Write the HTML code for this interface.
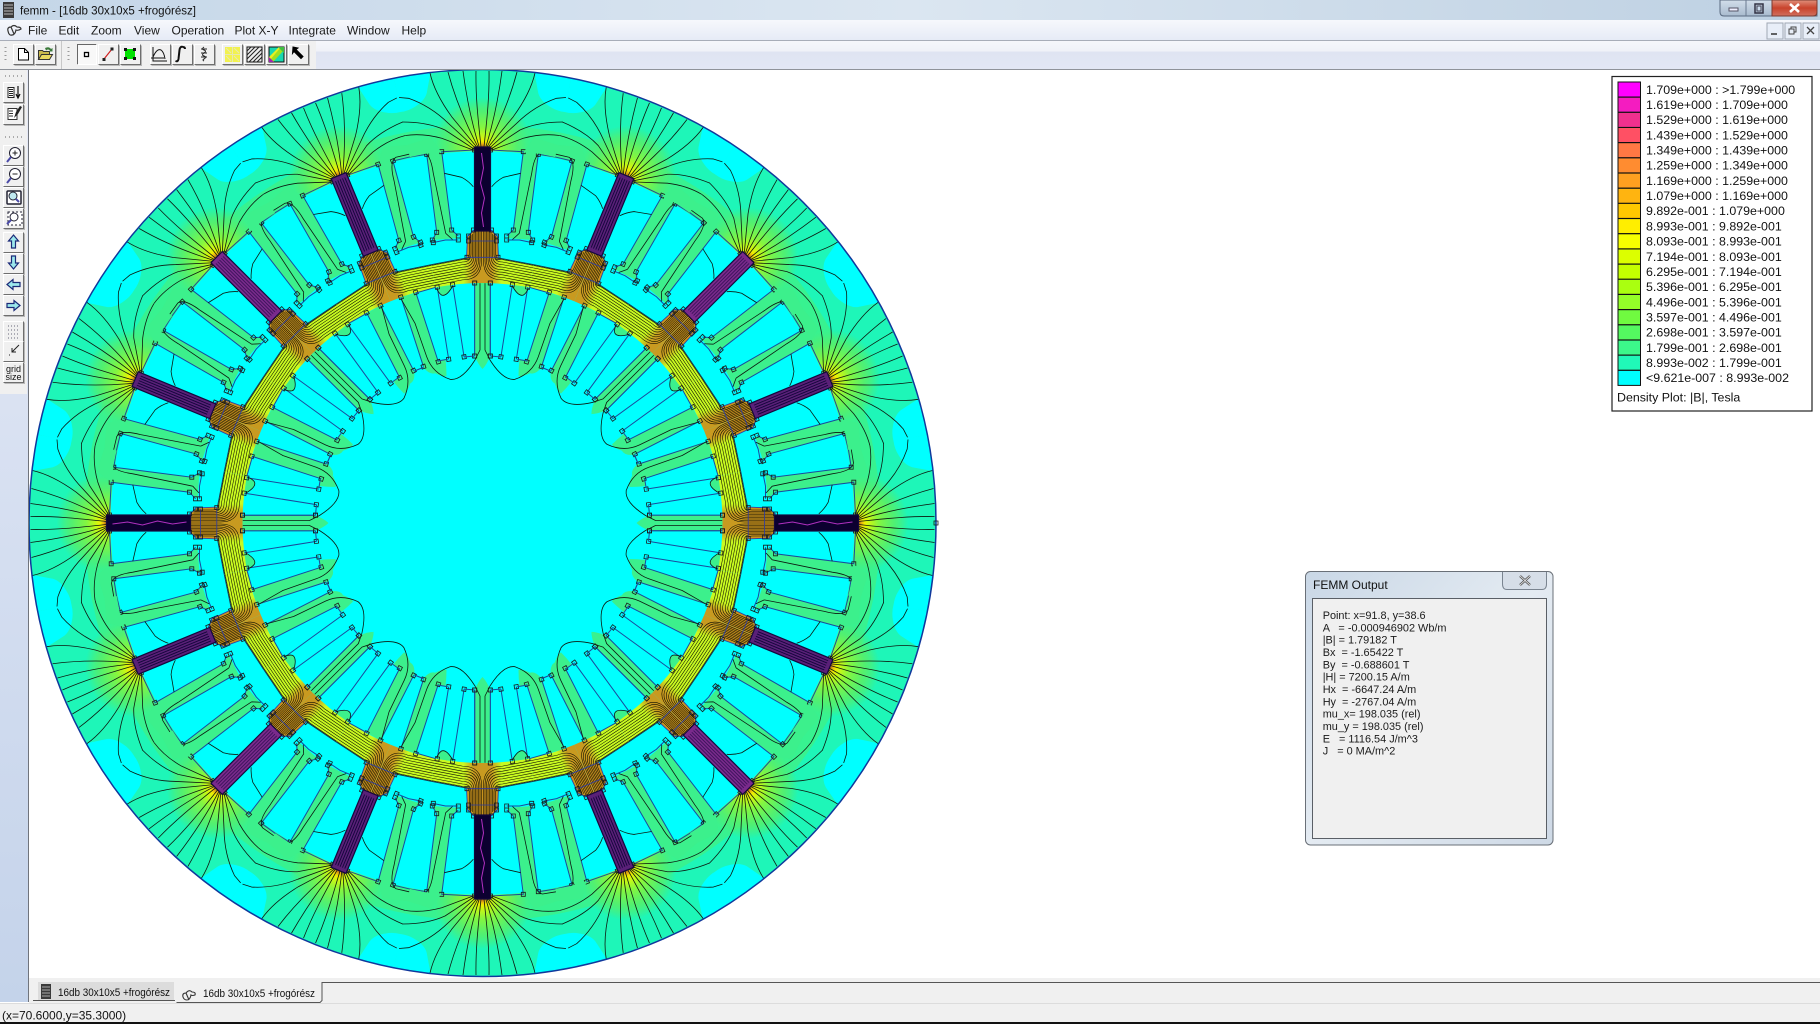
<!DOCTYPE html>
<html><head><meta charset="utf-8"><title>femm</title>
<style>
html,body{margin:0;padding:0;background:#fff;width:1820px;height:1024px;overflow:hidden}
svg{display:block;position:absolute;left:0;top:0}
text{font-family:"Liberation Sans",sans-serif;fill:#111;white-space:pre}
.m{font-size:12px;fill:#1a1a1a}
.l{font-size:12.4px;fill:#111}
.d{font-size:10.9px;fill:#1a1a1a}
.c{stroke:#0c1a10;stroke-width:.8;fill:none;stroke-linejoin:round}
.y{stroke:#0a0a00;stroke-width:.55;fill:none}
.s{stroke:#1a4a9c;stroke-width:1;fill:none}
.q{stroke:#1a1a1a;stroke-width:.8;fill:none}
</style></head><body>
<svg width="1820" height="1024" viewBox="0 0 1820 1024" xmlns="http://www.w3.org/2000/svg">
<defs>
<linearGradient id="tb" x1="0" x2="1" y1="0" y2="0"><stop offset="0" stop-color="#c4d6e8"/><stop offset=".5" stop-color="#dbe6f1"/><stop offset="1" stop-color="#bdd0e2"/></linearGradient>
<linearGradient id="mb" x1="0" x2="0" y1="0" y2="1"><stop offset="0" stop-color="#f6f8fc"/><stop offset="1" stop-color="#e6ebf6"/></linearGradient>
<linearGradient id="tr" x1="0" x2="0" y1="0" y2="1"><stop offset="0" stop-color="#f6f7fb"/><stop offset=".35" stop-color="#f0f2f8"/><stop offset=".4" stop-color="#dfe4f2"/><stop offset="1" stop-color="#e2e7f4"/></linearGradient>
<linearGradient id="lb" x1="0" x2="0" y1="0" y2="1"><stop offset="0" stop-color="#e6eaf7"/><stop offset="1" stop-color="#c4d3ea"/></linearGradient>
<linearGradient id="cl" x1="0" x2="0" y1="0" y2="1"><stop offset="0" stop-color="#e0907c"/><stop offset=".5" stop-color="#c8432c"/><stop offset="1" stop-color="#d07060"/></linearGradient>
<linearGradient id="mn" x1="0" x2="0" y1="0" y2="1"><stop offset="0" stop-color="#d2deea"/><stop offset="1" stop-color="#a8bace"/></linearGradient>
<linearGradient id="dg" x1="0" x2="1" y1="0" y2="1"><stop offset="0" stop-color="#c9d7e6"/><stop offset=".5" stop-color="#e4ebf2"/><stop offset="1" stop-color="#ced9e6"/></linearGradient>
<radialGradient id="tip" gradientUnits="userSpaceOnUse" cx="0" cy="-376" r="50"><stop offset="0" stop-color="#a85a10"/><stop offset=".06" stop-color="#e8b010"/><stop offset=".12" stop-color="#f0ee00"/><stop offset=".22" stop-color="#c4f818"/><stop offset=".4" stop-color="#84f640"/><stop offset=".7" stop-color="#52f070" stop-opacity=".9"/><stop offset="1" stop-color="#3cf08c" stop-opacity="0"/></radialGradient>
<linearGradient id="yk" gradientUnits="userSpaceOnUse" x1="9" y1="0" x2="19" y2="0"><stop offset="0" stop-color="#c89a20"/><stop offset="1" stop-color="#c8fa20"/></linearGradient>

<g id="b"><rect width="21" height="21" fill="#f0f0f0"/><path d="M.5 20.5V.5H20.5" stroke="#fff" fill="none"/><path d="M.5 20.5H20.5V.5" stroke="#6e6e6e" fill="none"/><path d="M1.5 21.5H21.5V1.5" stroke="#a8a8a8" fill="none" stroke-width=".8"/></g>

<!-- back of the outer half unit -->
<g id="ob">
<path d="M52 -450 L55.8 -429.7 Q58 -422 67.5 -416.3 Q74 -412 82 -411 L88.4 -444.3 A453 453 0 0 0 52 -450Z" fill="#00ffff"/>
<circle cx="0" cy="-376" r="50" fill="url(#tip)"/>
</g>
<!-- outer half unit -->
<g id="oh">
<!-- tooth -->
<path d="M40.8 -372L55.8 -369L45.8 -291L50.2 -283L24.2 -285L30.8 -293Z" fill="#3cf08c"/>
<path d="M40.8 -373L55.8 -369L88.5 -363L104 -358L100 -376L50 -380Z" fill="#3cf08c"/>
<!-- yoke -->
<path d="M0 -265L16 -265L51.4 -258.2L46.8 -235.4A240 240 0 0 0 0 -240Z" fill="url(#yk)"/>
<!-- hub -->
<path d="M0 -293L8 -293L15 -287L16 -265L0 -265Z" fill="#c8921e"/>
<path class="y" d="M1 -292L1 -262Q1 -243.1 20 -243.1L47.3 -237.9M2.5 -292L2.5 -262Q2.5 -245.6 20 -245.6L47.8 -240.3M4 -292L4 -263Q4 -248.2 20 -248.2L48.3 -242.8M5.5 -292L5.5 -264Q5.5 -250.8 20 -250.8L48.8 -245.3M7 -292L7 -265Q7 -253.3 20 -253.3L49.2 -247.7M8.5 -291L8.5 -267Q8.5 -255.9 20 -255.9L49.7 -250.2M10 -289L10 -268Q10 -258.4 20 -258.4L50.2 -252.6M11.5 -288L11.5 -269Q11.5 -261 20 -261L50.7 -255.1M13 -287L13 -270Q13 -263.4 20 -263.4L51.2 -257.5"/>
<path d="M0 -293H8M8 -293L15 -287L16 -265M0 -282H14M0 -265.7H15.5" stroke="#2a3aa8" stroke-width=".8" fill="none"/>
<path d="M16 -265L51.4 -258.2" stroke="#123a50" stroke-width="1" fill="none"/>
<!-- slots -->
<path class="s" d="M8 -373L40.8 -371.3L30.8 -293L24.2 -287M55.8 -368.7L73 -366M55.8 -368.7L45.8 -290.7L50.2 -283M24.2 -283L37 -283L50.2 -280.3M9 -293L14 -287"/>
<!-- squares -->
<path class="q" d="M6 -375h4v4h-4zM38.8 -373.3h4v4h-4zM53.8 -370.7h4v4h-4zM28.8 -295h4v4h-4zM43.8 -292.7h4v4h-4zM22.2 -289h4v4h-4zM22.2 -285h4v4h-4zM48.2 -285h4v4h-4zM47.2 -282.3h4v4h-4zM7 -295h4v4h-4zM12 -284h4v4h-4zM13.5 -267.7h4v4h-4zM12 -289h4v4h-4z"/>
<!-- contours -->
<path class="c" d="M1.5 -376C4 -400 7 -425 6.5 -452M3 -375Q14 -410 19.5 -452M4 -375Q25 -415 34.5 -451M5 -375L30.8 -406.3Q48 -430 52.5 -450M6 -374L34.2 -399.7Q52 -417 74 -424.7L83.5 -425.5M7 -373L37.5 -393Q55 -401 80 -401M8 -372.5L40.8 -384.7Q60 -390 77 -387.5M36.8 -289.7L49.2 -349.7Q52 -370 60 -371L73.4 -368.8M9.2 -336.3Q14 -342 20.8 -345.7L38.2 -349.7M36.8 -289.7L30 -283.5"/>
</g>
<!-- inner tooth lines -->
<g id="tt"><path class="s" d="M7.8 -240V-167M-7.8 -240V-167"/><path class="q" d="M5.8 -242h4v4h-4zM-9.8 -242h4v4h-4zM5.8 -169h4v4h-4zM-9.8 -169h4v4h-4z"/></g>
<!-- inner unit (wedge 0-22.5) -->
<g id="ih">
<path d="M0 -240H7.8V-167Q4 -158 0 -154Z" fill="#3cf08c"/>
<path d="M66.8 -230L82.2 -225.7L59.2 -155.7Q53 -148 47.5 -149.7Q40 -146 36 -147Q36 -155 37 -163.4L44.8 -162Z" fill="#3cf08c"/>
<path d="M29.8 -238L45.8 -236Q42 -226 38 -228Q32 -232 29.8 -238Z" fill="#3cf08c"/>
<use href="#tt"/><use href="#tt" transform="rotate(9)"/><use href="#tt" transform="rotate(18)"/>
<path class="s" d="M7.8 -167L18.5 -166M34.8 -163.7L44.8 -162M59.2 -155.7L68.5 -151.7M46.8 -235.7L66.8 -230"/>
<path class="c" d="M81.8 -224.7L67.5 -199.7L55.8 -166.3Q50 -150 32.5 -143.7Q20.8 -142 7.5 -163L2.5 -173L2.5 -239.7M29.8 -237Q36 -226 41 -228Q44 -230 46 -235"/>
</g>
<!-- replication -->
<g id="b2"><use href="#ob"/><use href="#ob" transform="scale(-1 1)"/></g>
<g id="b4"><use href="#b2"/><use href="#b2" transform="rotate(22.5)"/></g>
<g id="b8"><use href="#b4"/><use href="#b4" transform="rotate(45)"/></g>
<g id="b16"><use href="#b8"/><use href="#b8" transform="rotate(90)"/></g>
<g id="f2"><use href="#oh"/><use href="#oh" transform="scale(-1 1)"/></g>
<g id="f4"><use href="#f2"/><use href="#f2" transform="rotate(22.5)"/></g>
<g id="f8"><use href="#f4"/><use href="#f4" transform="rotate(45)"/></g>
<g id="f16"><use href="#f8"/><use href="#f8" transform="rotate(90)"/></g>
<g id="i2"><use href="#ih"/><use href="#ih" transform="scale(-1 1)"/></g>
<g id="i4"><use href="#i2"/><use href="#i2" transform="rotate(45)"/></g>
<g id="i8"><use href="#i4"/><use href="#i4" transform="rotate(90)"/></g>
<rect id="mg" x="-8" y="-376" width="16" height="84" stroke="#14083c" stroke-width="1.2"/>
<path id="wig" d="M-1 -370L1 -355L-2 -340L2 -325L-1 -310L1 -296" stroke="#b030c0" stroke-width="1" fill="none"/>
<path id="mstr" d="M-5 -372V-296M-2.500 -372V-296M0 -372V-296M2.500 -372V-296M5 -372V-296" stroke="#12063a" stroke-width=".9" fill="none"/>
</defs>

<rect width="1820" height="1024" fill="#fff"/>

<!-- FEMM drawing -->
<g transform="translate(482.5 523)">
<circle r="453.5" fill="#1ef6b8"/>
<circle r="398" fill="#38f290"/>
<use href="#b16"/><use href="#b16" transform="rotate(180)"/>
<circle r="372" fill="#00ffff"/>
<use href="#f16"/><use href="#f16" transform="rotate(180)"/>
<g fill="#0c0030">
<use href="#mg"/><use href="#mg" transform="rotate(90)"/><use href="#mg" transform="rotate(180)"/><use href="#mg" transform="rotate(270)"/>
</g>
<use href="#wig"/><use href="#wig" transform="rotate(90)"/><use href="#wig" transform="rotate(180)"/><use href="#wig" transform="rotate(270)"/>
<g fill="#5a2078">
<use href="#mg" transform="rotate(22.5)"/><use href="#mg" transform="rotate(67.5)"/><use href="#mg" transform="rotate(112.5)"/><use href="#mg" transform="rotate(157.5)"/><use href="#mg" transform="rotate(202.5)"/><use href="#mg" transform="rotate(247.5)"/><use href="#mg" transform="rotate(292.5)"/><use href="#mg" transform="rotate(337.5)"/>
<use href="#mstr" transform="rotate(22.5)"/><use href="#mstr" transform="rotate(67.5)"/><use href="#mstr" transform="rotate(112.5)"/><use href="#mstr" transform="rotate(157.5)"/><use href="#mstr" transform="rotate(202.5)"/><use href="#mstr" transform="rotate(247.5)"/><use href="#mstr" transform="rotate(292.5)"/><use href="#mstr" transform="rotate(337.5)"/>
</g>
<g fill="#7a2a8c">
<use href="#mg" transform="rotate(45)"/><use href="#mg" transform="rotate(135)"/><use href="#mg" transform="rotate(225)"/><use href="#mg" transform="rotate(315)"/>
<g opacity=".6"><use href="#mstr" transform="rotate(45)"/><use href="#mstr" transform="rotate(135)"/><use href="#mstr" transform="rotate(225)"/><use href="#mstr" transform="rotate(315)"/></g>
</g>
<use href="#i8"/><use href="#i8" transform="rotate(180)"/>
<circle r="453.5" fill="none" stroke="#10389c" stroke-width="1.5"/>
<path class="q" d="M451.5 -2h4v4h-4z"/>
</g>

<!-- title bar -->
<rect width="1820" height="20" fill="url(#tb)"/>
<rect x="3" y="2" width="11" height="16" fill="#3a3a3a"/>
<path d="M4 5h9M4 8h9M4 11h9M4 14h9" stroke="#bbb" stroke-width="1"/>
<text x="20" y="14.5" font-size="12" textLength="176" lengthAdjust="spacingAndGlyphs" fill="#111">femm - [16db 30x10x5 +frogórész]</text>
<path d="M1720 0V12Q1720 16 1724 16H1817Q1817 16 1817 12V0Z" fill="url(#mn)" stroke="#5a6a80"/>
<path d="M1746 0V16M1772 0V16" stroke="#6a7a90"/>
<path d="M1772 0H1817V12Q1817 16 1813 16H1772Z" fill="url(#cl)" stroke="#7a3a30"/>
<rect x="1729" y="8" width="9" height="3" fill="#eef" stroke="#556"/>
<rect x="1755" y="4" width="8" height="9" fill="none" stroke="#334" stroke-width="1.5"/><rect x="1757" y="6" width="4" height="5" fill="#cde" stroke="#445"/>
<path d="M1790 4L1799 12M1799 4L1790 12" stroke="#fff" stroke-width="2.6"/>

<!-- menu bar -->
<rect y="20" width="1820" height="20" fill="url(#mb)"/>
<rect y="40" width="1820" height="1" fill="#a8adb8"/>
<path d="M8 31Q7 27 11 27Q14 24 17 27Q21 27 21 29Q18 31 16 30Q15 35 12 35Q9 36 8 31ZM11 27L14 34" fill="none" stroke="#333" stroke-width="1.2"/>
<text class="m" x="28" y="34.5">File</text>
<text class="m" x="58.500" y="34.5">Edit</text>
<text class="m" x="91" y="34.5">Zoom</text>
<text class="m" x="134" y="34.5">View</text>
<text class="m" x="171.500" y="34.5">Operation</text>
<text class="m" x="234.500" y="34.5">Plot X-Y</text>
<text class="m" x="288.500" y="34.5">Integrate</text>
<text class="m" x="347" y="34.5">Window</text>
<text class="m" x="401.500" y="34.5">Help</text>
<g fill="#e8eef8" stroke="#a0a8b4"><rect x="1767" y="23" width="16" height="16"/><rect x="1785" y="23" width="16" height="16"/><rect x="1803" y="23" width="16" height="16"/></g>
<path d="M1771 34h6" stroke="#333" stroke-width="1.5"/>
<path d="M1789 29h5v5h-5zM1791 29v-2h5v5h-2" stroke="#444" fill="none"/>
<path d="M1807 27l7 7M1814 27l-7 7" stroke="#444" stroke-width="1.3"/>

<!-- main toolbar -->
<rect y="41" width="1820" height="28" fill="url(#tr)"/>
<rect y="41" width="316" height="28" fill="#f0f0f0"/>
<rect y="69" width="1820" height="1" fill="#8f939a"/>
<rect x="61" y="41" width="1" height="28" fill="#c8c8c8"/>
<path d="M5.5 47v1M5.5 51v1M5.5 55v1M5.5 59v1M68.5 47v1M68.5 51v1M68.5 55v1M68.5 59v1" stroke="#999" stroke-width="2"/>
<use href="#b" x="13" y="44"/><use href="#b" x="35" y="44"/>
<rect x="77" y="44" width="20" height="21" fill="#f8f8f8"/><path d="M77.500 64.500V44.500H96.500" stroke="#666" fill="none"/><path d="M77.500 64.500H96.500V44.500" stroke="#fff" fill="none"/>
<use href="#b" x="98" y="44"/><use href="#b" x="120" y="44"/><use href="#b" x="150" y="44"/><use href="#b" x="172" y="44"/><use href="#b" x="194" y="44"/><use href="#b" x="222" y="44"/><use href="#b" x="244" y="44"/><use href="#b" x="266" y="44"/><use href="#b" x="288" y="44"/>
<!-- icons -->
<path d="M18.500 48.500h6l4 4v7.500h-10z" fill="#fff" stroke="#000"/><path d="M24.500 48.500v4h4" fill="none" stroke="#000"/>
<path d="M38.500 59.500v-9h4l1 1h6v8z" fill="#c8b84c" stroke="#333"/><path d="M38.500 59.500l3-5h11l-3 5z" fill="#e8d860" stroke="#333"/><path d="M45 48q4-2 6 1l1.500-1v3.500h-3.500l1-1q-2-2-4 0" fill="#3a7a3a"/>
<rect x="84.500" y="52.500" width="4" height="4" fill="#fff" stroke="#000" stroke-width="1.3"/>
<path d="M104 59L112 49" stroke="#d02020" stroke-width="1.2"/><rect x="102.500" y="58" width="3" height="3" fill="#222"/><rect x="110.500" y="47.500" width="3" height="3" fill="#222"/>
<rect x="125" y="49" width="10" height="10" fill="#00e000"/><g fill="#111"><rect x="124" y="48" width="3" height="3"/><rect x="133" y="48" width="3" height="3"/><rect x="124" y="57" width="3" height="3"/><rect x="133" y="57" width="3" height="3"/></g>
<path d="M153 47v14h14M151 58h13M153 57q4-9 8-7q3 2 4 9" fill="none" stroke="#111"/>
<path d="M183 47q-3-1-3.500 3l-1 9q-.5 3-3 2M183 47q2 0 2 2" fill="none" stroke="#111" stroke-width="2"/>
<path d="M204 47q-3 2 0 3q3 1 0 3q-3 2 0 3q3 1 0 3q-2 1 0 2M201 49h6M201 53h6M201 57h6" fill="none" stroke="#222" stroke-width="1"/>
<rect x="225" y="47" width="15" height="15" fill="#f2f24e"/><path d="M225 54.500h15M232.500 47v15M226 48l5 5M234 48l5 5M226 56l5 5M234 56l5 5" stroke="#e8e8b0"/>
<rect x="247" y="47" width="15" height="15" fill="#eee" stroke="#111"/><path d="M247 51l4-4M247 55l8-8M247 59l12-12M249 62l13-13M253 62l9-9M257 62l5-5" stroke="#222" stroke-width="1"/>
<rect x="269" y="47" width="15" height="15" fill="#18d8b0" stroke="#111"/><path d="M269 57l10-10h5v2l-13 13h-2z" fill="#e8f020"/><path d="M270 60l11-13h3v3l-11 12h-3z" fill="#a0e020"/><path d="M269 62v-5l5 5z" fill="#a020b0"/><path d="M284 47v6l-6-6z" fill="#40c040"/>
<path d="M293 47l5 1-2 1.500 7 7-2 2-7-7-1.500 2z" fill="#000" stroke="#000"/>

<!-- left toolbar -->
<rect y="70" width="28" height="932" fill="url(#lb)"/>
<rect y="70" width="27" height="324" fill="#f0f0f0"/>
<rect x="28" y="70" width="1" height="932" fill="#70747c"/>
<path d="M5 76h1M9 76h1M13 76h1M17 76h1M21 76h1M5 137h1M9 137h1M13 137h1M17 137h1M21 137h1" stroke="#aaa" stroke-width="2"/>
<use href="#b" x="3" y="82"/><use href="#b" x="3" y="104"/>
<use href="#b" x="3" y="145"/><use href="#b" x="3" y="166"/><use href="#b" x="3" y="187"/><use href="#b" x="3" y="208"/>
<use href="#b" x="3" y="232"/><use href="#b" x="3" y="253"/><use href="#b" x="3" y="274"/><use href="#b" x="3" y="295"/>
<use href="#b" x="3" y="321"/><use href="#b" x="3" y="341"/><use href="#b" x="3" y="362"/>
<!-- list / edit -->
<path d="M8 87.500h6v10h-6zM9 89.500h4M9 91.500h4M9 93.500h4M9 95.500h4" fill="#fff" stroke="#222"/><path d="M18 86v11M16 94l2 4 2-4" fill="none" stroke="#111" stroke-width="1.2"/>
<path d="M8 108.500h9v11h-9zM9 111h4M9 113.500h4M9 116h4" fill="#fff" stroke="#333"/><path d="M14 118l2-6 4-6 2 1-4 7z" fill="#222"/>
<!-- zoom icons -->
<g fill="#fff" stroke="#223"><circle cx="15" cy="153" r="5.500"/><circle cx="15" cy="174" r="5.500"/><rect x="7" y="191" width="14" height="13" rx="1" stroke-width="1.500"/><rect x="8" y="212" width="14" height="13" stroke-dasharray="2 2"/></g>
<circle cx="13" cy="196" r="4" fill="#bfe8f0" stroke="#223"/><circle cx="14" cy="217" r="4" fill="#fff" stroke="#223"/>
<path d="M12.500 153h5M15 150.500v5M12.500 174h5" stroke="#222"/>
<path d="M11 157l-4 5M11 178l-4 5M16 199l3 3M11 220l-4 4" stroke="#4a4aa8" stroke-width="2"/>
<!-- arrows -->
<g fill="#9ce8ec" stroke="#1a2a78" stroke-width="1.200">
<path d="M13.500 235l5 6h-3v7h-4v-7h-3z"/>
<path d="M13.500 269l5-6h-3v-7h-4v7h-3z"/>
<path d="M7 284.500l6-5v3h7v4h-7v3z"/>
<path d="M20 305.500l-6-5v3h-7v4h7v3z"/>
</g>
<!-- grid -->
<path d="M8 326h12M8 330h12M8 334h12M8 338h12" stroke="#667" stroke-dasharray="1 2"/>
<path d="M19 345l-7 7M12 348v4h4M9 355h1" stroke="#222" fill="none"/>
<text x="13.500" y="372" font-size="9" text-anchor="middle" fill="#222">grid</text>
<text x="13.500" y="380" font-size="9" text-anchor="middle" fill="#222">size</text>

<!-- tab bar / status -->
<rect x="29" y="978" width="1791" height="25" fill="#f0f0f0"/>
<rect y="1003" width="1820" height="1" fill="#dcdcdc"/>
<rect y="1004" width="1820" height="18" fill="#f0f0f0"/>
<rect y="1022" width="1820" height="2" fill="#111"/>
<rect x="38" y="982" width="136" height="18" fill="#dcdcdc"/><path d="M33 1000.500H175" stroke="#555"/>
<path d="M176.500 1002.500H320l2-2V982.500H1820" stroke="#555" fill="none"/>
<rect x="41" y="984" width="10" height="15" fill="#3a3a3a"/><path d="M42 987h8M42 990h8M42 993h8M42 996h8" stroke="#aaa"/>
<text x="58" y="996" font-size="11" textLength="112" lengthAdjust="spacingAndGlyphs" fill="#111">16db 30x10x5 +frogórész</text>
<path d="M183 997q-1-4 3-4q3-4 6-1q4 0 3 3q-3 1-4 0q-1 5-4 5q-3 0-4-3zM186 993l3 7" fill="none" stroke="#333" stroke-width="1.100"/>
<text x="203" y="997" font-size="11" textLength="112" lengthAdjust="spacingAndGlyphs" fill="#111">16db 30x10x5 +frogórész</text>
<text x="2" y="1019.500" font-size="12" fill="#222">(x=70.6000,y=35.3000)</text>

<!-- legend -->
<rect x="1612" y="76.500" width="200" height="334.500" fill="#fff" stroke="#222" stroke-width="1.200"/>
<g stroke="#111" stroke-width="1">
<rect x="1618" y="82" width="22.500" height="15" fill="#ff00ff"/>
<rect x="1618" y="97.200" width="22.500" height="15" fill="#f41cc0"/>
<rect x="1618" y="112.400" width="22.500" height="15" fill="#f0308e"/>
<rect x="1618" y="127.500" width="22.500" height="15" fill="#ff5064"/>
<rect x="1618" y="142.700" width="22.500" height="15" fill="#ff7844"/>
<rect x="1618" y="157.900" width="22.500" height="15" fill="#ff8c30"/>
<rect x="1618" y="173.100" width="22.500" height="15" fill="#ffa020"/>
<rect x="1618" y="188.300" width="22.500" height="15" fill="#ffb410"/>
<rect x="1618" y="203.400" width="22.500" height="15" fill="#ffc800"/>
<rect x="1618" y="218.600" width="22.500" height="15" fill="#ffee00"/>
<rect x="1618" y="233.800" width="22.500" height="15" fill="#f6ff00"/>
<rect x="1618" y="249" width="22.500" height="15" fill="#dcff00"/>
<rect x="1618" y="264.200" width="22.500" height="15" fill="#c4ff00"/>
<rect x="1618" y="279.300" width="22.500" height="15" fill="#aaff10"/>
<rect x="1618" y="294.500" width="22.500" height="15" fill="#94ff28"/>
<rect x="1618" y="309.700" width="22.500" height="15" fill="#70fa40"/>
<rect x="1618" y="324.900" width="22.500" height="15" fill="#54f860"/>
<rect x="1618" y="340.100" width="22.500" height="15" fill="#3cf88a"/>
<rect x="1618" y="355.200" width="22.500" height="15" fill="#20f8b8"/>
<rect x="1618" y="370.400" width="22.500" height="15" fill="#00ffff"/>
</g>
<text class="l" x="1646" y="93.800">1.709e+000 : &gt;1.799e+000</text>
<text class="l" x="1646" y="109">1.619e+000 : 1.709e+000</text>
<text class="l" x="1646" y="124.200">1.529e+000 : 1.619e+000</text>
<text class="l" x="1646" y="139.300">1.439e+000 : 1.529e+000</text>
<text class="l" x="1646" y="154.500">1.349e+000 : 1.439e+000</text>
<text class="l" x="1646" y="169.700">1.259e+000 : 1.349e+000</text>
<text class="l" x="1646" y="184.900">1.169e+000 : 1.259e+000</text>
<text class="l" x="1646" y="200.100">1.079e+000 : 1.169e+000</text>
<text class="l" x="1646" y="215.200">9.892e-001 : 1.079e+000</text>
<text class="l" x="1646" y="230.400">8.993e-001 : 9.892e-001</text>
<text class="l" x="1646" y="245.600">8.093e-001 : 8.993e-001</text>
<text class="l" x="1646" y="260.800">7.194e-001 : 8.093e-001</text>
<text class="l" x="1646" y="276">6.295e-001 : 7.194e-001</text>
<text class="l" x="1646" y="291.100">5.396e-001 : 6.295e-001</text>
<text class="l" x="1646" y="306.300">4.496e-001 : 5.396e-001</text>
<text class="l" x="1646" y="321.500">3.597e-001 : 4.496e-001</text>
<text class="l" x="1646" y="336.700">2.698e-001 : 3.597e-001</text>
<text class="l" x="1646" y="351.900">1.799e-001 : 2.698e-001</text>
<text class="l" x="1646" y="367">8.993e-002 : 1.799e-001</text>
<text class="l" x="1646" y="382.200">&lt;9.621e-007 : 8.993e-002</text>
<text class="l" x="1617" y="401.500">Density Plot: |B|, Tesla</text>

<!-- FEMM output dialog -->
<rect x="1305.500" y="571.500" width="247.500" height="273.500" rx="5" fill="url(#dg)" stroke="#6a7078"/>
<rect x="1312.500" y="598.500" width="234" height="240" fill="#f0f0f0" stroke="#5a5f66"/>
<path d="M1502.500 572V584Q1502.500 589.500 1507 589.500H1542Q1546.500 589.500 1546.500 584V572" fill="#d6dee8" stroke="#7a8490"/>
<path d="M1520 576L1530 585M1530 576L1520 585" stroke="#555" stroke-width="2.400"/><path d="M1520 576L1530 585M1530 576L1520 585" stroke="#eee" stroke-width=".8"/>
<text x="1313" y="589" font-size="12" fill="#222">FEMM Output</text>
<text class="d" x="1322.700" y="619">Point: x=91.8, y=38.6</text>
<text class="d" x="1322.700" y="631.300">A   = -0.000946902 Wb/m</text>
<text class="d" x="1322.700" y="643.700">|B| = 1.79182 T</text>
<text class="d" x="1322.700" y="656">Bx  = -1.65422 T</text>
<text class="d" x="1322.700" y="668.300">By  = -0.688601 T</text>
<text class="d" x="1322.700" y="680.700">|H| = 7200.15 A/m</text>
<text class="d" x="1322.700" y="693">Hx  = -6647.24 A/m</text>
<text class="d" x="1322.700" y="705.300">Hy  = -2767.04 A/m</text>
<text class="d" x="1322.700" y="717.700">mu_x= 198.035 (rel)</text>
<text class="d" x="1322.700" y="730">mu_y = 198.035 (rel)</text>
<text class="d" x="1322.700" y="742.300">E   = 1116.54 J/m^3</text>
<text class="d" x="1322.700" y="754.700">J   = 0 MA/m^2</text>
</svg>
</body></html>
